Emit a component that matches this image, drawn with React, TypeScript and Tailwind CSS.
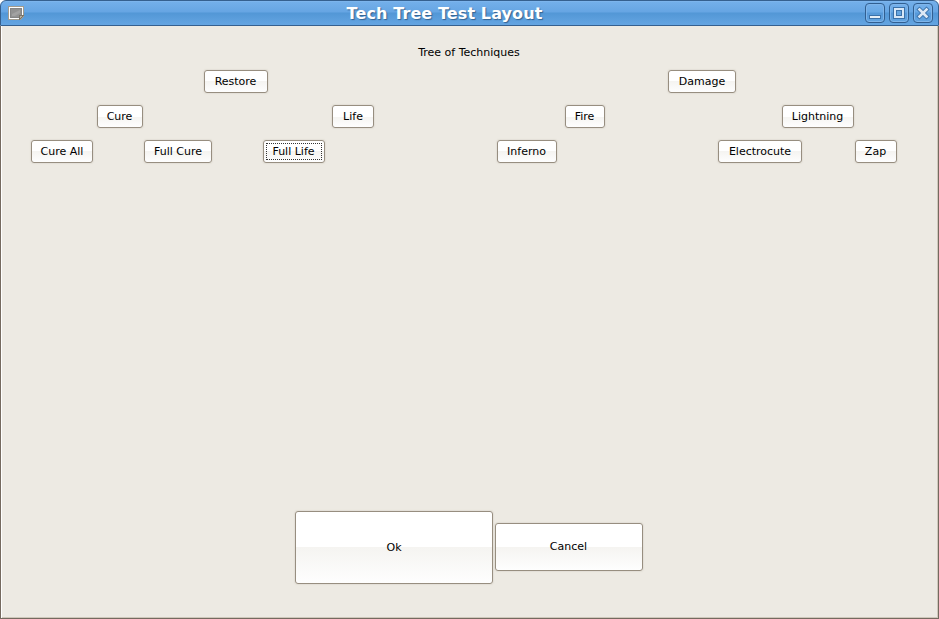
import type { ReactNode } from "react";

type ButtonProps = { label: string; className: string; focused?: boolean; textClass?: string };

function GtkButton({ label, className, focused, textClass = "" }: ButtonProps) {
  return (
    <button
      className={`flex shrink-0 rounded-[3px] border border-[#978e80] bg-[linear-gradient(to_bottom,#ffffff_0%,#ffffff_50%,#f5f4f1_50%,#fefefe_100%)] p-[2px] shadow-[0_0_1px_1px_#e3dfd7] ${className}`}
    >
      <span
        className={`flex h-full w-full items-center justify-center border border-dotted whitespace-nowrap ${
          focused ? "border-[#333]" : "border-transparent"
        }`}
      >
        <span className={textClass}>{label}</span>
      </span>
    </button>
  );
}

function WindowControl({ label, children }: { label: string; children: ReactNode }) {
  return (
    <button
      aria-label={label}
      className="h-[20px] w-[20px] rounded-[4px] border border-[#315f91] bg-[linear-gradient(to_bottom,#75b0eb_0%,#68a8e5_45%,#5598d8_50%,#62a4e1_100%)] shadow-[inset_0_0_0_1px_#7fb5ea]"
    >
      <svg width="18" height="18" viewBox="0 0 18 18" shapeRendering="crispEdges">
        {children}
      </svg>
    </button>
  );
}

export default function App() {
  return (
    <div className="flex h-[619px] w-[939px] flex-col overflow-hidden bg-white font-['DejaVu_Sans',sans-serif] text-[11px] leading-[13px] text-black">
      <header className="flex h-[26px] shrink-0 items-start rounded-t-[6px] border border-[#35608f] bg-[linear-gradient(to_bottom,#85baf0_0px,#73afea_1px,#66a5e3_11px,#5297d6_12px,#64a5e2_24px)]">
        <svg className="mt-[5px] ml-[7px] shrink-0" width="16" height="14" viewBox="0 0 16 14" shapeRendering="crispEdges">
          <path d="M0 0h16v10l-4 4H0z" fill="#a39c8e" />
          <path d="M1 1h14v9l-3 3H1z" fill="#fff" />
          <path d="M2 2h12v7l-3 3H2z" fill="#858585" />
          <path d="M3 3h10v6l-2 2H3z" fill="#929292" />
          <path d="M4 8l8-4v3l-5 3H4z" fill="#a2a2a2" shapeRendering="auto" />
          <path d="M11 9h5l-5 5z" fill="#7b7569" />
          <path d="M12 10h2l-2 2z" fill="#b4aea2" />
        </svg>
        <h1 className="grow pt-[3px] text-center text-[16px] leading-[20px] font-bold tracking-[0.1px] text-white [text-shadow:1px_1px_1px_#356391]">
          Tech Tree Test Layout
        </h1>
        <div className="mt-[2px] mr-[5px] -ml-[0px] flex w-[68px] shrink-0 gap-1">
          <WindowControl label="Minimize">
            <path d="M3 11h12v4H3z" fill="#3b71a9" />
            <path d="M4 12h10v2H4z" fill="#e5eef7" />
          </WindowControl>
          <WindowControl label="Maximize">
            <path d="M3 3h12v12H3z" fill="#3b71a9" />
            <path d="M4 4h10v10H4z" fill="#d8e7f6" />
            <path d="M6 6h6v6H6z" fill="#3b71a9" />
            <path d="M7 7h4v4H7z" fill="#64a4df" />
          </WindowControl>
          <WindowControl label="Close">
            <g shapeRendering="auto" strokeLinecap="square">
              <path d="M5.5 5.5l7 7m0-7l-7 7" stroke="#3b71a9" strokeWidth="4.4" />
              <path d="M5.5 5.5l7 7m0-7l-7 7" stroke="#dce8f5" strokeWidth="2.6" />
            </g>
          </WindowControl>
        </div>
      </header>

      <main className="flex min-h-0 grow flex-col border-x border-b border-[#756a5f] bg-[#edeae3] shadow-[inset_1px_0_0_#fff,inset_-1px_-1px_0_#cfc8bb]">
        <p className="mt-5 pr-px text-center">Tree of Techniques</p>
        <div className="mt-[11px] flex flex-col gap-3">
          <div className="flex h-[23px]">
            <GtkButton label="Restore" className="ml-[203px] w-[64px]" textClass="pr-px" />
            <GtkButton label="Damage" className="ml-[400px] w-[68px]" />
          </div>
          <div className="flex h-[23px]">
            <GtkButton label="Cure" className="ml-[96px] w-[46px]" textClass="pr-px" />
            <GtkButton label="Life" className="ml-[189px] w-[42px]" />
            <GtkButton label="Fire" className="ml-[191px] w-[40px]" textClass="pr-px" />
            <GtkButton label="Lightning" className="ml-[177px] w-[72px]" textClass="pr-px" />
          </div>
          <div className="flex h-[23px]">
            <GtkButton label="Cure All" className="ml-[30px] w-[62px]" />
            <GtkButton label="Full Cure" className="ml-[51px] w-[68px]" />
            <GtkButton label="Full Life" className="ml-[51px] w-[62px]" textClass="pr-px" focused />
            <GtkButton label="Inferno" className="ml-[172px] w-[60px]" textClass="pr-px" />
            <GtkButton label="Electrocute" className="ml-[161px] w-[84px]" />
            <GtkButton label="Zap" className="ml-[53px] w-[42px]" textClass="pr-px" />
          </div>
        </div>
        <div className="mt-auto mb-[34px] flex items-start justify-center gap-[2px] pr-px">
          <GtkButton label="Ok" className="h-[73px] w-[198px]" />
          <GtkButton label="Cancel" className="mt-3 h-[48px] w-[148px]" textClass="pr-px pb-0.5" />
        </div>
      </main>
    </div>
  );
}
